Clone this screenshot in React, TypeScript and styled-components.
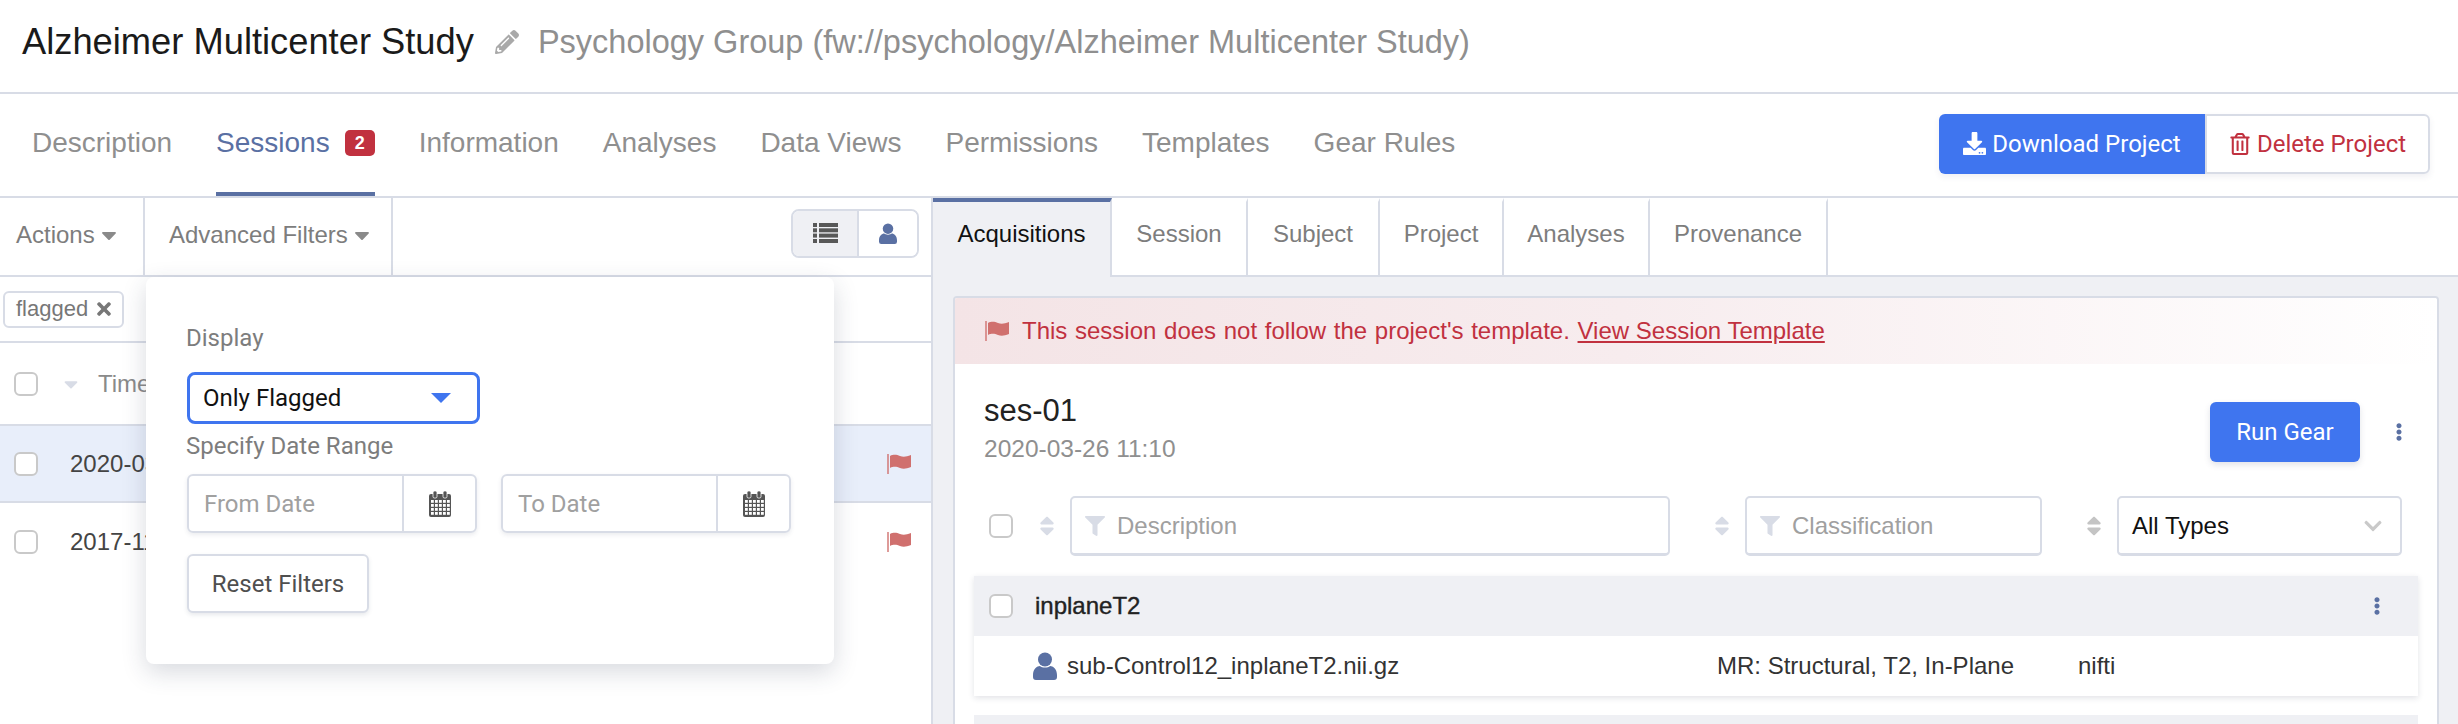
import React from "react";
import styled, { createGlobalStyle } from "styled-components";
import {
  FaCaretDown,
  FaChevronDown,
  FaDownload,
  FaEllipsisV,
  FaFilter,
  FaPencilAlt,
  FaSort,
  FaTimes,
  FaRegTrashAlt,
} from "react-icons/fa";

const colors = {
  border: "#d8dce6",
  panel: "#eff0f4",
  blue: "#3f75ef",
  navy: "#5a70a3",
  red: "#c1313f",
  flag: "#d0706e",
  grey: "#8f8f8f",
  text: "#333333",
};

const GlobalStyle = createGlobalStyle`
  html, body {
    margin: 0;
    padding: 0;
    background: #fff;
  }
  body {
    font-family: "Liberation Sans", Arial, sans-serif;
    color: ${colors.text};
  }
`;

const Page = styled.div`
  position: relative;
  width: 2458px;
  height: 724px;
  overflow: hidden;
`;

const TitleBar = styled.header`
  display: flex;
  align-items: center;
  height: 94px;
  padding: 0 0 8px 22px;
  box-sizing: border-box;
  border-bottom: 2px solid ${colors.border};
`;

const Title = styled.h1`
  margin: 0;
  font-size: 36.3px;
  font-weight: 400;
  color: #1a1a1a;
`;

const Pencil = styled(FaPencilAlt)`
  width: 24px;
  height: 24px;
  margin: 0 19px 0 21px;
  color: #a9a9a9;
`;

const Subtitle = styled.span`
  font-size: 32.5px;
  color: ${colors.grey};
`;

const NavBar = styled.nav`
  display: flex;
  align-items: stretch;
  height: 104px;
  padding: 0 28px 0 32px;
  box-sizing: border-box;
  border-bottom: 2px solid ${colors.border};
`;

const NavTab = styled.a<{ $active?: boolean }>`
  display: flex;
  align-items: center;
  gap: 15px;
  margin-right: 44px;
  font-size: 28px;
  color: ${(p) => (p.$active ? colors.navy : colors.grey)};
  border-bottom: 4px solid ${(p) => (p.$active ? colors.navy : "transparent")};
`;

const Badge = styled.span`
  display: inline-flex;
  align-items: center;
  justify-content: center;
  width: 30px;
  height: 26px;
  border-radius: 5px;
  background: ${colors.red};
  color: #fff;
  font-size: 18px;
  font-weight: 700;
`;

const ButtonGroup = styled.div`
  display: flex;
  align-self: center;
  margin-left: auto;
  margin-bottom: 3px;
  box-shadow: 0 3px 6px rgba(60, 70, 100, 0.08);
  border-radius: 6px;
`;

const DownloadButton = styled.button`
  display: flex;
  align-items: center;
  justify-content: center;
  gap: 6px;
  width: 266px;
  height: 60px;
  border: 0;
  border-radius: 6px 0 0 6px;
  background: ${colors.blue};
  color: #fff;
  font: 24px "Roboto", sans-serif;
`;

const DeleteButton = styled(DownloadButton)`
  width: 225px;
  border: 2px solid ${colors.border};
  border-radius: 0 6px 6px 0;
  background: #fff;
  color: ${colors.red};
`;

const Content = styled.main`
  display: flex;
  height: 526px;
`;

const LeftPane = styled.section`
  flex: none;
  width: 931px;
  border-right: 2px solid ${colors.border};
`;

const Toolbar = styled.div`
  display: flex;
  align-items: stretch;
  height: 79px;
  box-sizing: border-box;
  border-bottom: 2px solid ${colors.border};
  padding-right: 12px;
`;

const ToolbarItem = styled.div<{ $width: number; $pad: number }>`
  display: flex;
  align-items: center;
  gap: 2px;
  width: ${(p) => p.$width}px;
  box-sizing: border-box;
  padding: 0 0 4px ${(p) => p.$pad}px;
  border-right: 2px solid ${colors.border};
  font-size: 24px;
  color: #7d7d7d;
`;

const Caret = styled(FaCaretDown)`
  width: 24px;
  height: 24px;
  color: #8a8a8a;
`;

const ViewToggle = styled.div`
  display: flex;
  align-self: center;
  margin: 0 0 7px auto;
  height: 49px;
  border: 2px solid ${colors.border};
  border-radius: 8px;
  overflow: hidden;
  box-sizing: border-box;
`;

const ToggleCell = styled.div<{ $active?: boolean; $width: number }>`
  display: flex;
  align-items: center;
  justify-content: center;
  width: ${(p) => p.$width}px;
  background: ${(p) => (p.$active ? colors.panel : "#fff")};
  color: ${(p) => (p.$active ? "#585858" : colors.navy)};
  & + & {
    border-left: 2px solid ${colors.border};
  }
`;

const ChipRow = styled.div`
  display: flex;
  align-items: center;
  height: 66px;
  box-sizing: border-box;
  padding-left: 3px;
  border-bottom: 2px solid ${colors.border};
`;

const Chip = styled.span`
  display: flex;
  align-items: center;
  gap: 6px;
  height: 33px;
  padding: 0 8px 0 11px;
  border: 2px solid ${colors.border};
  border-radius: 6px;
  font-size: 22px;
  color: #777;
`;

const SessionRow = styled.div<{ $selected?: boolean; $height: number; $noBorder?: boolean }>`
  display: flex;
  align-items: center;
  height: ${(p) => p.$height}px;
  padding: 0 20px 0 14px;
  box-sizing: border-box;
  background: ${(p) => (p.$selected ? "#e8eefa" : "#fff")};
  border-bottom: ${(p) => (p.$noBorder ? "0" : `2px solid ${colors.border}`)};
  font-size: 24px;
  color: #444;
`;

const Check = styled.span<{ $mr?: number }>`
  flex: none;
  width: 24px;
  height: 24px;
  box-sizing: border-box;
  border: 2px solid #c9c9c9;
  border-radius: 6px;
  background: #fff;
  margin-right: ${(p) => p.$mr ?? 0}px;
`;

const HeadCaret = styled(FaCaretDown)`
  width: 22px;
  height: 22px;
  margin-right: 16px;
  color: ${colors.border};
`;

const TimeLabel = styled.span`
  color: #8a8a8a;
`;

const FlagSvg = styled.svg<{ $pushRight?: boolean }>`
  flex: none;
  width: 24px;
  height: 20px;
  color: ${colors.flag};
  margin-left: ${(p) => (p.$pushRight ? "auto" : "0")};
`;

const Popover = styled.div`
  position: absolute;
  left: 146px;
  top: 277px;
  width: 688px;
  height: 387px;
  padding: 47px 40px 0 40px;
  box-sizing: border-box;
  background: #fff;
  border-radius: 8px;
  box-shadow: 0 8px 24px rgba(40, 50, 80, 0.18);
  font-family: "Roboto", sans-serif;
`;

const FieldLabel = styled.div`
  font-size: 24px;
  line-height: 28px;
  color: #7d7d7d;
`;

const FakeSelect = styled.div`
  display: flex;
  align-items: center;
  justify-content: space-between;
  width: 293px;
  height: 52px;
  margin: 20px 0 8px 1px;
  padding: 0 26px 0 13px;
  box-sizing: border-box;
  border: 3px solid ${colors.blue};
  border-radius: 8px;
  font-size: 24px;
  color: #111;
`;

const SelectArrow = styled.span`
  width: 0;
  height: 0;
  border-left: 10px solid transparent;
  border-right: 10px solid transparent;
  border-top: 10px solid ${colors.blue};
`;

const DateRow = styled.div`
  display: flex;
  gap: 24px;
  margin: 14px 0 21px 1px;
`;

const DateField = styled.div`
  display: flex;
  width: 290px;
  height: 59px;
  box-sizing: border-box;
  border: 2px solid ${colors.border};
  border-radius: 6px;
  box-shadow: 0 2px 4px rgba(60, 70, 100, 0.1);
`;

const DateText = styled.span`
  flex: 1;
  display: flex;
  align-items: center;
  padding-left: 15px;
  font-size: 24px;
  color: #a0a0a0;
`;

const DateIcon = styled.span`
  display: flex;
  align-items: center;
  justify-content: center;
  width: 71px;
  border-left: 2px solid ${colors.border};
  color: #555;
`;

const ResetButton = styled.button`
  display: block;
  width: 182px;
  height: 59px;
  margin-left: 1px;
  border: 2px solid ${colors.border};
  border-radius: 6px;
  background: #fff;
  font: 24px "Roboto", sans-serif;
  color: #4f4f4f;
  box-shadow: 0 2px 4px rgba(60, 70, 100, 0.12);
`;

const RightPane = styled.section`
  flex: 1;
  min-width: 0;
  background: ${colors.panel};
`;

const DetailTabs = styled.div`
  display: flex;
  height: 79px;
  box-sizing: border-box;
  background: #fff;
`;

const DetailTab = styled.div<{ $width: number; $active?: boolean }>`
  display: flex;
  align-items: center;
  justify-content: center;
  width: ${(p) => p.$width}px;
  box-sizing: border-box;
  font-size: 24px;
  color: ${(p) => (p.$active ? "#111" : "#7d7d7d")};
  background: ${(p) => (p.$active ? colors.panel : "#fff")};
  border-top: 4px solid ${(p) => (p.$active ? colors.navy : "transparent")};
  border-right: 2px solid ${colors.border};
  border-bottom: ${(p) => (p.$active ? "0" : `2px solid ${colors.border}`)};
  padding-bottom: ${(p) => (p.$active ? "12px" : "10px")};
`;

const TabFill = styled.div`
  flex: 1;
  border-bottom: 2px solid ${colors.border};
`;

const Card = styled.div`
  margin: 19px 19px 0 20px;
  background: #fff;
  border: 2px solid ${colors.border};
  border-bottom: 0;
  border-radius: 4px 4px 0 0;
  height: 460px;
  overflow: hidden;
`;

const Alert = styled.div`
  display: flex;
  align-items: center;
  gap: 13px;
  height: 66px;
  padding: 0 0 0 30px;
  background: linear-gradient(90deg, #f4e4e6 0%, #f7ecee 45%, #ffffff 100%);
  color: ${colors.red};
  font-size: 24px;
  white-space: pre;
  word-spacing: 1px;
`;

const AlertLink = styled.a`
  text-decoration: underline;
  word-spacing: 0;
`;

const SessionHead = styled.div`
  display: flex;
  justify-content: space-between;
  align-items: flex-start;
  padding: 29px 29px 0 29px;
`;

const SessionName = styled.div`
  font-size: 31px;
  line-height: 36px;
  color: #222;
`;

const SessionDate = styled.div`
  margin-top: 6px;
  font-size: 24.5px;
  line-height: 28px;
  color: ${colors.grey};
`;

const HeadActions = styled.div`
  display: flex;
  align-items: center;
  gap: 30px;
  margin-top: 9px;
`;

const RunButton = styled.button`
  width: 150px;
  height: 60px;
  border: 0;
  border-radius: 6px;
  background: ${colors.blue};
  color: #fff;
  font: 24px "Roboto", sans-serif;
  box-shadow: 0 3px 6px rgba(60, 70, 100, 0.15);
`;

const Dots = styled(FaEllipsisV)`
  width: 18px;
  height: 18px;
  color: ${colors.navy};
`;

const FilterRow = styled.div`
  display: flex;
  align-items: center;
  margin-top: 33px;
  padding-left: 34px;
`;

const SortIcon = styled(FaSort)<{ $ml: number; $dark?: boolean }>`
  flex: none;
  width: 16px;
  height: 24px;
  margin: 0 15px 0 ${(p) => p.$ml}px;
  color: ${(p) => (p.$dark ? "#c4c4c4" : colors.border)};
`;

const FilterBox = styled.div<{ $width: number }>`
  display: flex;
  align-items: center;
  gap: 12px;
  width: ${(p) => p.$width}px;
  height: 60px;
  padding: 0 13px;
  box-sizing: border-box;
  border: 2px solid ${colors.border};
  border-bottom-width: 3px;
  border-radius: 5px;
  font-size: 24px;
  color: #a0a0a0;
`;

const FunnelIcon = styled(FaFilter)`
  width: 20px;
  height: 20px;
  color: ${colors.border};
`;

const TypeBox = styled(FilterBox)`
  justify-content: space-between;
  color: #111;
  padding-right: 17px;
`;

const TypeChevron = styled(FaChevronDown)`
  width: 20px;
  height: 20px;
  color: #c9c9c9;
`;

const Acquisition = styled.div`
  margin: 20px 19px 0 19px;
  box-shadow: 0 2px 6px rgba(40, 50, 80, 0.14);
`;

const AcquisitionHead = styled.div`
  display: flex;
  align-items: center;
  height: 60px;
  padding: 0 32px 0 15px;
  background: ${colors.panel};
  font-size: 24px;
  -webkit-text-stroke: 0.4px #222;
  color: #222;
`;

const HeadDots = styled(Dots)`
  margin-left: auto;
`;

const FileRow = styled.div`
  display: flex;
  align-items: center;
  height: 60px;
  padding-left: 59px;
  background: #fff;
  font-size: 24px;
`;

const FileIcon = styled.span`
  display: flex;
  margin-right: 10px;
  color: ${colors.navy};
`;

const FileName = styled.span`
  width: 650px;
`;

const FileClass = styled.span`
  width: 361px;
`;

const NextAcquisition = styled.div`
  margin: 19px 19px 0 19px;
  height: 30px;
  background: ${colors.panel};
`;

const navItems = ["Information", "Analyses", "Data Views", "Permissions", "Templates", "Gear Rules"];
const detailTabs = [
  { label: "Session", width: 136 },
  { label: "Subject", width: 132 },
  { label: "Project", width: 124 },
  { label: "Analyses", width: 146 },
  { label: "Provenance", width: 178 },
];

function Flag({ pushRight }: { pushRight?: boolean }) {
  return (
    <FlagSvg $pushRight={pushRight} viewBox="0 0 24 20">
      <rect x="0" y="0" width="2" height="20" fill="currentColor" opacity="0.7" />
      <path d="M3 2C7 0 10 1 13 2C16 3 19 3 24 1V13C19 15 16 15 13 14C10 13 7 12 3 14Z" fill="currentColor" />
    </FlagSvg>
  );
}

function UserIcon({ width, height }: { width: number; height: number }) {
  return (
    <svg width={width} height={height} viewBox="0 0 24 28" fill="currentColor">
      <circle cx="12" cy="7.5" r="7" />
      <path d="M3 28Q0 28 0 25V23C0 17 4 14 7 14C9 16 15 16 17 14C20 14 24 17 24 23V25Q24 28 21 28Z" />
    </svg>
  );
}

function ListIcon() {
  return (
    <svg width="25" height="20" viewBox="0 0 25 20" fill="currentColor">
      {[0, 5.3, 10.6, 16].map((y) => (
        <g key={y}>
          <rect x="0" y={y} width="4" height="4" />
          <rect x="6" y={y} width="19" height="4" />
        </g>
      ))}
    </svg>
  );
}

function CalendarIcon() {
  const rows = [9, 13, 17, 21];
  const cols = [3, 7, 11, 15, 19];
  return (
    <svg width="24" height="26" viewBox="0 0 24 26" fill="currentColor">
      <rect x="1" y="3" width="22" height="23" rx="2" />
      <rect x="5" y="0" width="4" height="7" rx="1.5" stroke="#fff" strokeWidth="0.8" />
      <rect x="15" y="0" width="4" height="7" rx="1.5" stroke="#fff" strokeWidth="0.8" />
      {rows.map((y) =>
        cols.map((x) => <rect key={`${x}-${y}`} x={x} y={y} width="2.8" height="2.8" fill="#fff" />)
      )}
    </svg>
  );
}

function DateInput({ placeholder }: { placeholder: string }) {
  return (
    <DateField>
      <DateText>{placeholder}</DateText>
      <DateIcon>
        <CalendarIcon />
      </DateIcon>
    </DateField>
  );
}

function App(): JSX.Element {
  return (
    <Page>
      <GlobalStyle />
      <TitleBar>
        <Title>Alzheimer Multicenter Study</Title>
        <Pencil />
        <Subtitle>Psychology Group (fw://psychology/Alzheimer Multicenter Study)</Subtitle>
      </TitleBar>
      <NavBar>
        <NavTab>Description</NavTab>
        <NavTab $active>
          Sessions <Badge>2</Badge>
        </NavTab>
        {navItems.map((item) => (
          <NavTab key={item}>{item}</NavTab>
        ))}
        <ButtonGroup>
          <DownloadButton>
            <FaDownload size={23} />
            Download Project
          </DownloadButton>
          <DeleteButton>
            <FaRegTrashAlt size={22} />
            Delete Project
          </DeleteButton>
        </ButtonGroup>
      </NavBar>
      <Content>
        <LeftPane>
          <Toolbar>
            <ToolbarItem $width={145} $pad={16}>
              Actions <Caret />
            </ToolbarItem>
            <ToolbarItem $width={248} $pad={24}>
              Advanced Filters <Caret />
            </ToolbarItem>
            <ViewToggle>
              <ToggleCell $active $width={64}>
                <ListIcon />
              </ToggleCell>
              <ToggleCell $width={58}>
                <UserIcon width={18} height={21} />
              </ToggleCell>
            </ViewToggle>
          </Toolbar>
          <ChipRow>
            <Chip>
              flagged <FaTimes size={20} />
            </Chip>
          </ChipRow>
          <SessionRow $height={83}>
            <Check $mr={22} />
            <HeadCaret />
            <TimeLabel>Time</TimeLabel>
          </SessionRow>
          <SessionRow $selected $height={77}>
            <Check $mr={32} />
            2020-03-26 11:10
            <Flag pushRight />
          </SessionRow>
          <SessionRow $height={78} $noBorder>
            <Check $mr={32} />
            2017-11-02 09:45
            <Flag pushRight />
          </SessionRow>
        </LeftPane>
        <RightPane>
          <DetailTabs>
            <DetailTab $active $width={179}>
              Acquisitions
            </DetailTab>
            {detailTabs.map((tab) => (
              <DetailTab key={tab.label} $width={tab.width}>
                {tab.label}
              </DetailTab>
            ))}
            <TabFill />
          </DetailTabs>
          <Card>
            <Alert>
              <Flag />
              <span>
                This session does not follow the project's template.{" "}
                <AlertLink>View Session Template</AlertLink>
              </span>
            </Alert>
            <SessionHead>
              <div>
                <SessionName>ses-01</SessionName>
                <SessionDate>2020-03-26 11:10</SessionDate>
              </div>
              <HeadActions>
                <RunButton>Run Gear</RunButton>
                <Dots />
              </HeadActions>
            </SessionHead>
            <FilterRow>
              <Check />
              <SortIcon $ml={26} />
              <FilterBox $width={600}>
                <FunnelIcon />
                Description
              </FilterBox>
              <SortIcon $ml={44} />
              <FilterBox $width={297}>
                <FunnelIcon />
                Classification
              </FilterBox>
              <SortIcon $ml={44} $dark />
              <TypeBox $width={285}>
                All Types
                <TypeChevron />
              </TypeBox>
            </FilterRow>
            <Acquisition>
              <AcquisitionHead>
                <Check $mr={22} />
                inplaneT2
                <HeadDots />
              </AcquisitionHead>
              <FileRow>
                <FileIcon>
                  <UserIcon width={24} height={28} />
                </FileIcon>
                <FileName>sub-Control12_inplaneT2.nii.gz</FileName>
                <FileClass>MR: Structural, T2, In-Plane</FileClass>
                nifti
              </FileRow>
            </Acquisition>
            <NextAcquisition />
          </Card>
        </RightPane>
      </Content>
      <Popover>
        <FieldLabel>Display</FieldLabel>
        <FakeSelect>
          Only Flagged
          <SelectArrow />
        </FakeSelect>
        <FieldLabel>Specify Date Range</FieldLabel>
        <DateRow>
          <DateInput placeholder="From Date" />
          <DateInput placeholder="To Date" />
        </DateRow>
        <ResetButton>Reset Filters</ResetButton>
      </Popover>
    </Page>
  );
}

export default App;
